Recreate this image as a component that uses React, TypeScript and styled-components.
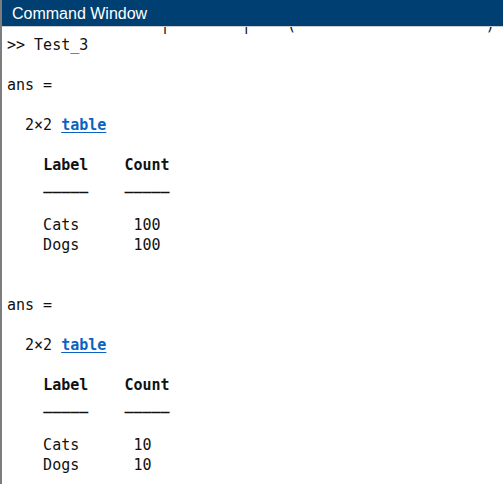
import React from "react";
import styled, { createGlobalStyle } from "styled-components";

const Global = createGlobalStyle`
  html, body { margin: 0; padding: 0; background: #ffffff; }
  #root { width: 503px; height: 484px; }
`;

const Window = styled.div`
  width: 503px;
  height: 484px;
  box-sizing: border-box;
  border-left: 2px solid #7d7d7d;
  display: flex;
  flex-direction: column;
  overflow: hidden;
  background: #ffffff;
`;

const TitleBar = styled.div`
  position: relative;
  z-index: 1;
  flex: 0 0 auto;
  height: 27px;
  box-sizing: border-box;
  background: #003f72;
  border-bottom: 1px solid #c9ced4;
  color: #ffffff;
  font-family: "Liberation Sans", Arial, sans-serif;
  font-size: 16px;
  line-height: 27px;
  padding-left: 10px;
  display: flex;
  align-items: center;
`;

const Console = styled.div`
  flex: 1 1 auto;
  overflow: hidden;
`;

const Scroller = styled.div`
  margin-top: -12px;
  padding-left: 5px;
  font-family: "DejaVu Sans Mono", "Liberation Mono", monospace;
  font-size: 15px;
  color: #111111;
`;

const Line = styled.div`
  height: 20px;
  line-height: 20px;
  white-space: pre;
`;

const Bold = styled.span`
  font-weight: bold;
`;

const Link = styled.span`
  font-weight: bold;
  color: #0a63c2;
  text-decoration: underline;
  text-underline-offset: 2px;
`;

type Row = { label: string; count: string };

function TableOutput({ rows }: { rows: Row[] }) {
  return (
    <>
      <Line>ans =</Line>
      <Line> </Line>
      <Line>
        {"  2×2 "}
        <Link>table</Link>
      </Line>
      <Line> </Line>
      <Line>
        {"    "}
        <Bold>Label</Bold>
        {"    "}
        <Bold>Count</Bold>
      </Line>
      <Line>
        {"    "}
        <Bold>_____</Bold>
        {"    "}
        <Bold>_____</Bold>
      </Line>
      <Line> </Line>
      {rows.map((r) => (
        <Line key={r.label}>{`    ${r.label.padEnd(10, " ")}${r.count}`}</Line>
      ))}
    </>
  );
}

export default function App() {
  const clipped =
    " ".repeat(17) + "|" + " ".repeat(8) + "|" + " ".repeat(4) + "(" + " ".repeat(21) + ")";
  return (
    <>
      <Global />
      <Window>
        <TitleBar>Command Window</TitleBar>
        <Console>
          <Scroller>
            <Line>{clipped}</Line>
            <Line>{">> Test_3"}</Line>
            <Line> </Line>
            <TableOutput
              rows={[
                { label: "Cats", count: "100" },
                { label: "Dogs", count: "100" },
              ]}
            />
            <Line> </Line>
            <Line> </Line>
            <TableOutput
              rows={[
                { label: "Cats", count: "10" },
                { label: "Dogs", count: "10" },
              ]}
            />
          </Scroller>
        </Console>
      </Window>
    </>
  );
}
